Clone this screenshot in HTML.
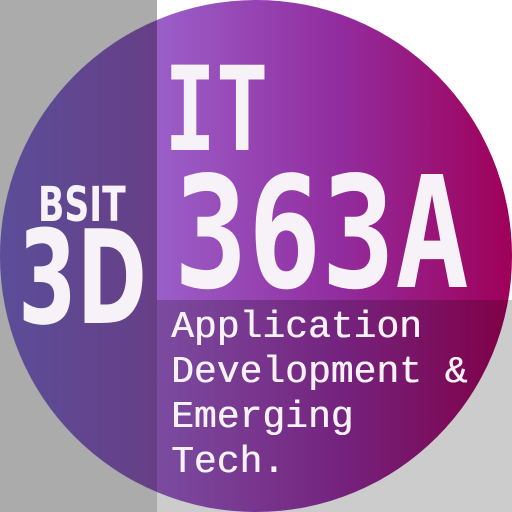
<!DOCTYPE html>
<html><head><style>
html,body{margin:0;padding:0;width:512px;height:512px;overflow:hidden;background:#fff;}
.c{position:absolute;left:0;top:0;width:512px;height:512px;border-radius:50%;background:linear-gradient(90deg,#8874e4 0px,#9a5ec8 160px,#922c9e 340px,#a00058 512px);}
.ov1{position:absolute;left:0;top:0;width:157px;height:512px;background:rgba(0,0,0,0.33);}
.ov2{position:absolute;left:157px;top:300px;width:355px;height:212px;background:rgba(0,0,0,0.2);}
.t{position:absolute;color:#f7f2f8;white-space:pre;line-height:1;}
.mono{font-family:"DejaVu Sans Mono",monospace;font-weight:bold;transform-origin:0 0;}
.sans{font-family:"DejaVu Sans","Liberation Sans",sans-serif;font-weight:bold;transform-origin:0 0;}
.cour{font-family:"Courier New","Nimbus Mono PS","FreeMono","Liberation Mono",monospace;font-size:38px;line-height:45px;text-shadow:0.5px 0 0 #f7f2f8;}
</style></head><body>
<div class="c"></div>
<div class="ov1"></div>
<div class="ov2"></div>
<div class="t mono" style="left:164px;top:51px;font-size:117px;transform:scaleX(0.74);">IT</div>
<div class="t mono" style="left:174px;top:156px;font-size:155px;transform:scaleX(0.79);">363A</div>
<div class="t sans" style="left:38px;top:181px;font-size:48px;transform:scaleX(0.72);">BSIT</div>
<div class="t sans" style="left:18px;top:213px;font-size:130px;transform:scaleX(0.65);">3D</div>
<div class="t cour" style="left:171px;top:305px;">Application
Development &amp;
Emerging
Tech.</div>
</body></html>
